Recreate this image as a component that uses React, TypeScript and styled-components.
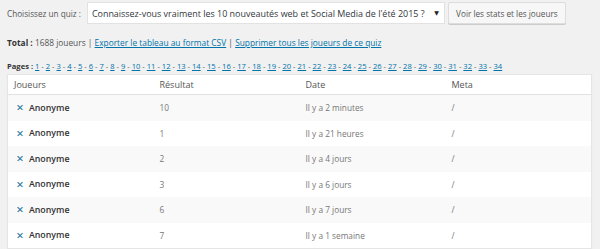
import React from 'react';
import styled, { createGlobalStyle } from 'styled-components';

const GlobalStyle = createGlobalStyle`
  html, body {
    margin: 0;
    padding: 0;
    background: #f1f1f1;
    font-family: 'Open Sans', 'DejaVu Sans', sans-serif;
    color: #444;
  }
`;

const Page = styled.div`
  width: 600px;
  height: 249px;
  overflow: hidden;
  padding: 2px 8px 0 7px;
  box-sizing: border-box;
`;

const QuizBar = styled.div`
  display: flex;
  align-items: center;
  height: 22px;
`;

const Label = styled.span`
  font-size: 8.2px;
  color: #555;
  margin-right: 6px;
  white-space: nowrap;
`;

const SelectBox = styled.div`
  display: flex;
  align-items: center;
  justify-content: space-between;
  width: 358px;
  height: 22px;
  box-sizing: border-box;
  background: #fff;
  border: 1px solid #e2e2e2;
  padding: 0 5px 0 4px;
  font-size: 8.95px;
  color: #32373c;
  margin-right: 3px;
  white-space: nowrap;
`;

const Caret = styled.span`
  font-size: 6px;
  color: #222;
`;

const Button = styled.button`
  height: 22px;
  box-sizing: border-box;
  padding: 0 4px;
  background: #f7f7f7;
  border: 1px solid #ddd;
  border-radius: 2px;
  box-shadow: 0 1px 0 #ccc;
  font-family: inherit;
  font-size: 8.2px;
  color: #555;
  width: 118px;
  white-space: nowrap;
`;

const TotalLine = styled.div`
  margin-top: 12px;
  font-size: 8.35px;
  color: #555;
  height: 14px;
  line-height: 14px;
  white-space: nowrap;

  b {
    color: #333;
  }
`;

const Link = styled.a`
  color: #0073aa;
  text-decoration: underline;
`;

const PagesLine = styled.div`
  margin-top: 11px;
  font-size: 7.6px;
  color: #555;
  height: 11px;
  line-height: 11px;
  white-space: nowrap;

  b {
    color: #333;
  }
`;

const Table = styled.table`
  margin-top: 2px;
  width: 585px;
  border-collapse: collapse;
  background: #fff;
  box-shadow: 0 1px 1px rgba(0, 0, 0, 0.06);
  border: 1px solid #e5e5e5;
  table-layout: fixed;
`;

const Th = styled.th`
  text-align: left;
  font-weight: normal;
  font-size: 9px;
  color: #555;
  padding: 0 6px;
  height: 19px;
  border-bottom: 1px solid #e1e1e1;
`;

const Row = styled.tr<{ striped: boolean }>`
  background: ${({ striped }) => (striped ? '#f9f9f9' : '#fff')};
`;

const Td = styled.td`
  font-size: 8.3px;
  color: #777;
  padding: 0 6px;
  height: 25.5px;
`;

const Player = styled.span`
  display: inline-flex;
  align-items: center;
  gap: 5px;
  padding-left: 2px;
  font-size: 8.8px;
  font-weight: 600;
  color: #333;
`;

const Cross = styled.span`
  color: #21759b;
  font-weight: 700;
  font-size: 9.5px;
`;

const rows = [
  { result: '10', date: 'Il y a 2 minutes' },
  { result: '1', date: 'Il y a 21 heures' },
  { result: '2', date: 'Il y a 4 jours' },
  { result: '3', date: 'Il y a 6 jours' },
  { result: '6', date: 'Il y a 7 jours' },
  { result: '7', date: 'Il y a 1 semaine' },
];

const pages = Array.from({ length: 34 }, (_, i) => i + 1);

const App: React.FC = () => {
  return (
    <Page>
      <GlobalStyle />
      <QuizBar>
        <Label>Choisissez un quiz :</Label>
        <SelectBox>
          <span>Connaissez-vous vraiment les 10 nouveautés web et Social Media de l'été 2015 ?</span>
          <Caret>▼</Caret>
        </SelectBox>
        <Button>Voir les stats et les joueurs</Button>
      </QuizBar>

      <TotalLine>
        <b>Total :</b> 1688 joueurs | <Link>Exporter le tableau au format CSV</Link> |{' '}
        <Link>Supprimer tous les joueurs de ce quiz</Link>
      </TotalLine>

      <PagesLine>
        <b>Pages :</b>{' '}
        {pages.map((p, i) => (
          <React.Fragment key={p}>
            <Link>{p}</Link>
            {i < pages.length - 1 && ' - '}
          </React.Fragment>
        ))}
      </PagesLine>

      <Table>
        <thead>
          <tr>
            <Th>Joueurs</Th>
            <Th>Résultat</Th>
            <Th>Date</Th>
            <Th>Meta</Th>
          </tr>
        </thead>
        <tbody>
          {rows.map((r, i) => (
            <Row key={i} striped={i % 2 === 0}>
              <Td>
                <Player>
                  <Cross>✕</Cross>
                  Anonyme
                </Player>
              </Td>
              <Td>{r.result}</Td>
              <Td>{r.date}</Td>
              <Td>/</Td>
            </Row>
          ))}
        </tbody>
      </Table>
    </Page>
  );
};

export default App;
